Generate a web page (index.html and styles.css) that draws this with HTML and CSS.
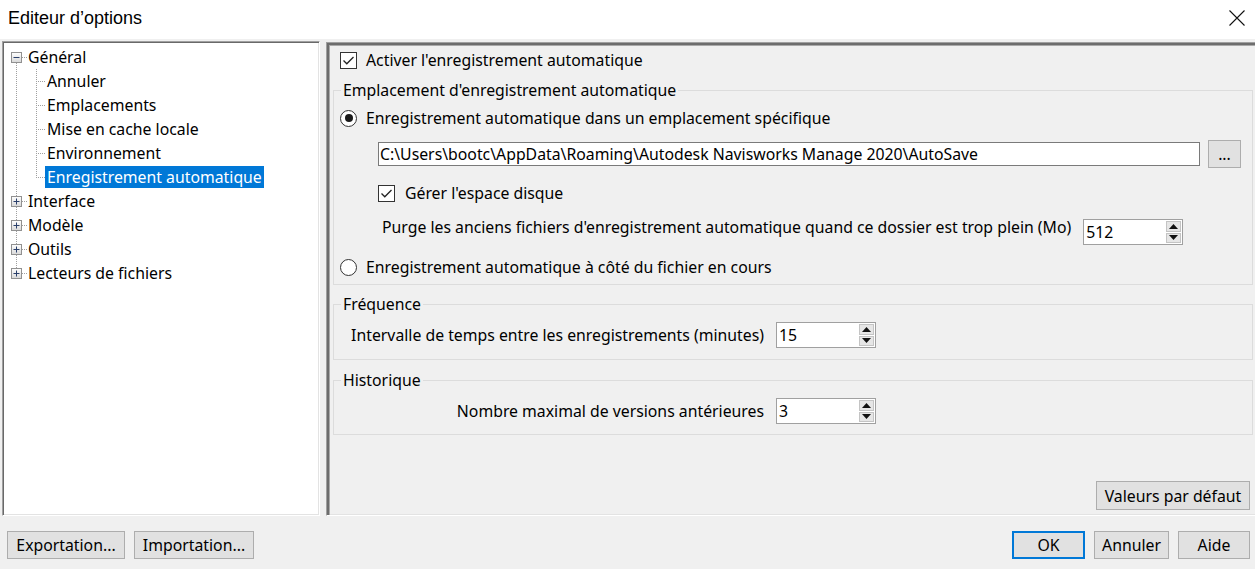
FILE: index.html
```html
<!DOCTYPE html>
<html lang="fr">
<head>
<meta charset="utf-8">
<title>Editeur d'options</title>
<link rel="stylesheet" href="styles.css">
</head>
<body>
<div class="window">
  <div class="titlebar">
    <span class="title">Editeur d’options</span>
    <svg class="close" width="16" height="16" viewBox="0 0 16 16"><path d="M0.5 0.5L15.5 15.5M15.5 0.5L0.5 15.5" stroke="#111" stroke-width="1.1" fill="none"/></svg>
  </div>

  <div class="main">
    <div class="tree">
      <div class="row top first">
        <span class="colA vbot"><svg class="exp" width="11" height="11" viewBox="0 0 11 11"><defs><linearGradient id="g1" x1="0" y1="0" x2="0" y2="1"><stop offset="0" stop-color="#fff"/><stop offset="1" stop-color="#d8d8d8"/></linearGradient></defs><rect x="0.5" y="0.5" width="10" height="10" fill="url(#g1)" stroke="#919191"/><path d="M2.5 5.5H8.5" stroke="#2a3f6a" stroke-width="1"/></svg></span>
        <span class="label">Général</span>
      </div>
      <div class="row child"><span class="colA vfull"></span><span class="colB bfull"></span><span class="label">Annuler</span></div>
      <div class="row child"><span class="colA vfull"></span><span class="colB bfull"></span><span class="label">Emplacements</span></div>
      <div class="row child"><span class="colA vfull"></span><span class="colB bfull"></span><span class="label">Mise en cache locale</span></div>
      <div class="row child"><span class="colA vfull"></span><span class="colB bfull"></span><span class="label">Environnement</span></div>
      <div class="row child"><span class="colA vfull"></span><span class="colB blast"></span><span class="label selected">Enregistrement automatique</span></div>
      <div class="row top">
        <span class="colA vfull"><svg class="exp" width="11" height="11" viewBox="0 0 11 11"><defs><linearGradient id="g2" x1="0" y1="0" x2="0" y2="1"><stop offset="0" stop-color="#fff"/><stop offset="1" stop-color="#d8d8d8"/></linearGradient></defs><rect x="0.5" y="0.5" width="10" height="10" fill="url(#g2)" stroke="#919191"/><path d="M2.5 5.5H8.5M5.5 2.5V8.5" stroke="#2a3f6a" stroke-width="1"/></svg></span>
        <span class="label">Interface</span>
      </div>
      <div class="row top">
        <span class="colA vfull"><svg class="exp" width="11" height="11" viewBox="0 0 11 11"><rect x="0.5" y="0.5" width="10" height="10" fill="url(#g2)" stroke="#919191"/><path d="M2.5 5.5H8.5M5.5 2.5V8.5" stroke="#2a3f6a" stroke-width="1"/></svg></span>
        <span class="label">Modèle</span>
      </div>
      <div class="row top">
        <span class="colA vfull"><svg class="exp" width="11" height="11" viewBox="0 0 11 11"><rect x="0.5" y="0.5" width="10" height="10" fill="url(#g2)" stroke="#919191"/><path d="M2.5 5.5H8.5M5.5 2.5V8.5" stroke="#2a3f6a" stroke-width="1"/></svg></span>
        <span class="label">Outils</span>
      </div>
      <div class="row top">
        <span class="colA vtop"><svg class="exp" width="11" height="11" viewBox="0 0 11 11"><rect x="0.5" y="0.5" width="10" height="10" fill="url(#g2)" stroke="#919191"/><path d="M2.5 5.5H8.5M5.5 2.5V8.5" stroke="#2a3f6a" stroke-width="1"/></svg></span>
        <span class="label">Lecteurs de fichiers</span>
      </div>
    </div>

    <div class="panel">
      <div class="check-row main-check">
        <span class="checkbox"><svg width="15" height="15" viewBox="0 0 15 15"><path d="M2.5 7.5L5.8 10.8L12.5 4" stroke="#222" stroke-width="1.3" fill="none"/></svg></span>
        <span>Activer l'enregistrement automatique</span>
      </div>

      <fieldset class="group g-loc">
        <legend>Emplacement d'enregistrement automatique</legend>
        <div class="radio-row r1">
          <span class="radio on"><span class="dot"></span></span>
          <span>Enregistrement automatique dans un emplacement spécifique</span>
        </div>
        <div class="path-row">
          <div class="path-input">C:\Users\bootc\AppData\Roaming\Autodesk Navisworks Manage 2020\AutoSave</div>
          <div class="btn browse">...</div>
        </div>
        <div class="check-row disk">
          <span class="checkbox"><svg width="15" height="15" viewBox="0 0 15 15"><path d="M2.5 7.5L5.8 10.8L12.5 4" stroke="#222" stroke-width="1.3" fill="none"/></svg></span>
          <span>Gérer l'espace disque</span>
        </div>
        <div class="purge-row">
          <span class="purge-text">Purge les anciens fichiers d'enregistrement automatique quand ce dossier est trop plein (Mo)</span>
          <div class="spin">
            <span class="spin-val">512</span>
            <span class="spin-btns">
              <span class="sb"><svg width="9" height="5" viewBox="0 0 9 5"><path d="M0 5L4.5 0L9 5Z" fill="#111"/></svg></span>
              <span class="sb"><svg width="9" height="5" viewBox="0 0 9 5"><path d="M0 0L4.5 5L9 0Z" fill="#111"/></svg></span>
            </span>
          </div>
        </div>
        <div class="radio-row r2">
          <span class="radio"></span>
          <span>Enregistrement automatique à côté du fichier en cours</span>
        </div>
      </fieldset>

      <fieldset class="group g-freq">
        <legend>Fréquence</legend>
        <div class="field-row">
          <span class="field-label">Intervalle de temps entre les enregistrements (minutes)</span>
          <div class="spin">
            <span class="spin-val">15</span>
            <span class="spin-btns">
              <span class="sb"><svg width="9" height="5" viewBox="0 0 9 5"><path d="M0 5L4.5 0L9 5Z" fill="#111"/></svg></span>
              <span class="sb"><svg width="9" height="5" viewBox="0 0 9 5"><path d="M0 0L4.5 5L9 0Z" fill="#111"/></svg></span>
            </span>
          </div>
        </div>
      </fieldset>

      <fieldset class="group g-hist">
        <legend>Historique</legend>
        <div class="field-row">
          <span class="field-label">Nombre maximal de versions antérieures</span>
          <div class="spin">
            <span class="spin-val">3</span>
            <span class="spin-btns">
              <span class="sb"><svg width="9" height="5" viewBox="0 0 9 5"><path d="M0 5L4.5 0L9 5Z" fill="#111"/></svg></span>
              <span class="sb"><svg width="9" height="5" viewBox="0 0 9 5"><path d="M0 0L4.5 5L9 0Z" fill="#111"/></svg></span>
            </span>
          </div>
        </div>
      </fieldset>

      <div class="spacer"></div>
      <div class="defaults-row"><div class="btn defaults">Valeurs par défaut</div></div>
    </div>
  </div>

  <div class="footer">
    <div class="btn b-export">Exportation...</div>
    <div class="btn b-import">Importation...</div>
    <div class="footer-gap"></div>
    <div class="btn b-ok">OK</div>
    <div class="btn b-cancel">Annuler</div>
    <div class="btn b-help">Aide</div>
  </div>
</div>
</body>
</html>
```

FILE: styles.css
```css
* { box-sizing: border-box; }
html, body { margin: 0; padding: 0; }
body {
  background: #f0f0f0;
  font-family: "Noto Sans", "Open Sans", sans-serif;
  font-size: 15.8px;
  line-height: 20px;
  color: #000;
  width: 1255px;
  height: 569px;
  overflow: hidden;
}
.window { display: flex; flex-direction: column; height: 569px; }

.titlebar {
  height: 39px;
  background: #fff;
  display: flex;
  align-items: center;
  justify-content: space-between;
  padding: 0 10px 3px 8px;
  flex: none;
}
.title { font-family: "Liberation Sans", Arial, sans-serif; font-size: 18px; }
.close { display: block; }

.main {
  display: flex;
  gap: 6px;
  padding-left: 2px;
  height: 477px;
  padding-top: 2px;
  flex: none;
}

/* ---------- tree ---------- */
.tree {
  width: 318px;
  background: #fff;
  border-top: 1px solid #a0a0a0;
  border-left: 1px solid #a0a0a0;
  border-right: 1px solid #fff;
  border-bottom: 1px solid #fff;
  box-shadow: inset 1px 1px 0 #696969, inset -1px -1px 0 #e3e3e3;
  padding: 3px 0 0 2px;
}
.row { display: flex; align-items: center; height: 24px; }
.colA, .colB { flex: none; height: 24px; display: flex; align-items: center; }
.colA { width: 22px; }
.colB { width: 18px; }
.exp { display: block; margin-left: 6px; }

.colA.vfull, .colA.vbot, .colA.vtop {
  background-repeat: no-repeat;
}
.colA.vfull {
  background-image:
    repeating-linear-gradient(to right, #a0a0a0 0 1px, transparent 1px 2px),
    repeating-linear-gradient(to bottom, #a0a0a0 0 1px, transparent 1px 2px);
  background-size: 5px 1px, 1px 24px;
  background-position: 17px 12px, 11px 0;
}
.row.child .colA.vfull { background-size: 0 0, 1px 24px; }
.colA.vbot {
  background-image:
    repeating-linear-gradient(to right, #a0a0a0 0 1px, transparent 1px 2px),
    repeating-linear-gradient(to bottom, #a0a0a0 0 1px, transparent 1px 2px);
  background-size: 5px 1px, 1px 12px;
  background-position: 17px 12px, 11px 12px;
}
.colA.vtop {
  background-image:
    repeating-linear-gradient(to right, #a0a0a0 0 1px, transparent 1px 2px),
    repeating-linear-gradient(to bottom, #a0a0a0 0 1px, transparent 1px 2px);
  background-size: 5px 1px, 1px 12px;
  background-position: 17px 12px, 11px 0;
  background-repeat: no-repeat;
}
.colB.bfull, .colB.blast {
  background-image:
    repeating-linear-gradient(to right, #a0a0a0 0 1px, transparent 1px 2px),
    repeating-linear-gradient(to bottom, #a0a0a0 0 1px, transparent 1px 2px);
  background-repeat: no-repeat;
  background-position: 9px 12px, 9px 0;
}
.colB.bfull { background-size: 9px 1px, 1px 24px; }
.colB.blast { background-size: 9px 1px, 1px 13px; }

.label { padding: 0 2px; line-height: 22px; white-space: nowrap; }
.row.top .label { margin-left: -1px; }
.label.selected { background: #0078d7; color: #fff; }

/* ---------- right panel ---------- */
.panel {
  flex: 1;
  display: flex;
  flex-direction: column;
  border-top: 1px solid #a0a0a0;
  border-left: 1px solid #a0a0a0;
  border-bottom: 1px solid #fff;
  box-shadow: inset 2px 2px 0 #6d6d6d, inset 3px 3px 0 #a9a9a9, inset 0 -1px 0 #e3e3e3;
  padding: 3px 0 0 3px;
  margin-top: 1px;
}

.check-row, .radio-row { display: flex; align-items: center; height: 20px; white-space: nowrap; }
.check-row.main-check { margin-top: 4px; padding-left: 10px; gap: 9px; }
.checkbox {
  width: 17px; height: 17px;
  border: 1px solid #333;
  background: #fff;
  display: flex; align-items: center; justify-content: center;
  flex: none;
}
.checkbox svg { display: block; }
.radio {
  width: 17px; height: 17px;
  border: 1px solid #333;
  border-radius: 50%;
  background: #fff;
  display: flex; align-items: center; justify-content: center;
  flex: none;
}
.radio .dot { width: 8px; height: 8px; border-radius: 50%; background: #1a1a1a; }

.group {
  border: 1px solid #dcdcdc;
  margin: 0 2px 0 3px;
  padding: 0;
  min-width: 0;
}
.group legend {
  margin-left: 7px;
  padding: 0 2px;
  line-height: 20px;
  height: 20px;
}
.g-loc { margin-top: 10px; padding-bottom: 7px; }
.radio-row { padding-left: 6px; gap: 9px; }
.radio-row.r1 { margin-top: 8px; }
.path-row {
  display: flex; align-items: center;
  height: 28px;
  margin-top: 12px;
  padding: 0 11px 0 44px;
  gap: 8px;
}
.path-input {
  flex: 1;
  height: 24px;
  border: 1px solid #7a7a7a;
  background: #fff;
  padding-left: 1px;
  line-height: 22px;
  white-space: nowrap;
  overflow: hidden;
}
.btn {
  background: #e1e1e1;
  border: 1px solid #adadad;
  display: flex; align-items: center; justify-content: center;
  white-space: nowrap;
  flex: none;
}
.btn.browse { width: 33px; height: 28px; }
.check-row.disk { margin-top: 15px; padding-left: 44px; gap: 10px; }
.purge-row {
  display: flex;
  align-items: flex-start;
  margin-top: 16px;
  padding-left: 48px;
  gap: 12px;
  height: 26px;
}
.purge-text { line-height: 20px; margin-top: -2px; white-space: nowrap; }
.radio-row.r2 { margin-top: 12px; }

.spin {
  width: 100px; height: 26px;
  border: 1px solid #a0a0a0;
  background: #fff;
  display: flex;
  align-items: center;
  justify-content: space-between;
  padding: 1px 1px 1px 2px;
  flex: none;
}
.spin-val { line-height: 22px; }
.spin-btns { display: flex; flex-direction: column; width: 15px; height: 22px; gap: 1px; }
.sb {
  flex: 1;
  background: #e6e6e6;
  border: 1px solid #c4c4c4;
  display: flex; align-items: center; justify-content: center;
}
.sb svg { display: block; }

.g-freq { margin-top: 9px; padding-bottom: 11px; }
.g-hist { margin-top: 10px; padding-bottom: 10px; }
.field-row {
  display: flex;
  align-items: center;
  margin-top: 8px;
  padding-left: 12px;
  gap: 12px;
}
.field-label { width: 418px; text-align: right; white-space: nowrap; }

.spacer { flex: 1; }
.defaults-row { display: flex; justify-content: flex-end; padding: 0 5px 5px 0; }
.btn.defaults { width: 154px; height: 29px; }

/* ---------- footer ---------- */
.footer {
  flex: 1;
  display: flex;
  align-items: flex-start;
  padding: 15px 5px 0 7px;
  gap: 9px;
}
.footer .btn { height: 28px; }
.b-export { width: 118px; }
.b-import { width: 120px; }
.footer-gap { flex: 1; }
.b-ok { width: 73px; border: 2px solid #0078d7; }
.b-cancel { width: 75px; }
.b-help { width: 72px; }
```
